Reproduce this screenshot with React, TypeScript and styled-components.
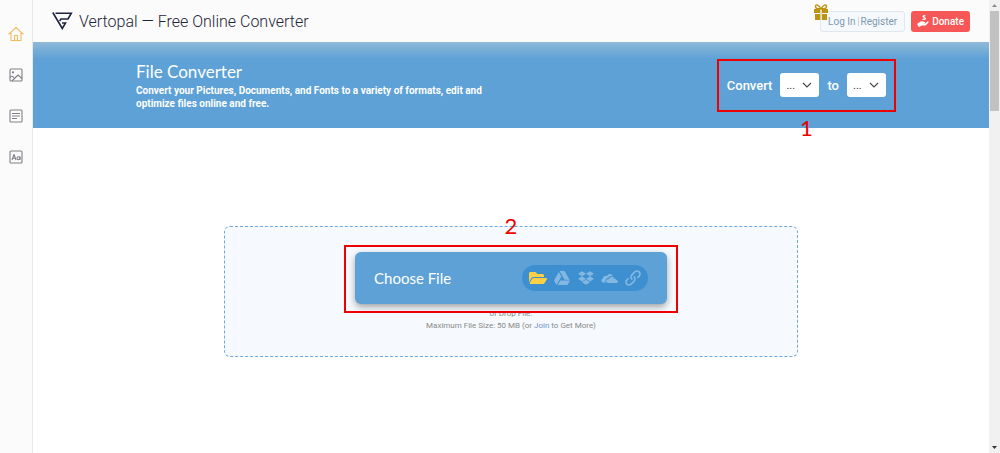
import React from "react";
import styled, { createGlobalStyle } from "styled-components";
import { FaFolderOpen, FaGoogleDrive, FaDropbox } from "react-icons/fa";
import { ImLink } from "react-icons/im";

const GlobalStyle = createGlobalStyle`
  *, *::before, *::after { box-sizing: border-box; }
  body { margin: 0; background: #fff; font-family: Roboto, "Liberation Sans", sans-serif; }
  a { text-decoration: none; color: inherit; }
  h1, h2, p { margin: 0; font-weight: 400; }
`;

const Page = styled.div`
  display: flex;
  min-height: 100vh;
`;

const Sidebar = styled.nav`
  flex: 0 0 33px;
  display: flex;
  flex-direction: column;
  align-items: center;
  gap: 25px;
  padding: 26px 1px 0 0;
  background: #fbfbfb;
  border-right: 1px solid #e6e8eb;
`;

const SideLink = styled.a<{ $active?: boolean }>`
  display: flex;
  color: ${(p) => (p.$active ? "#ecbd62" : "#7e8186")};
`;

const Main = styled.div`
  flex: 1;
  min-width: 0;
`;

const Header = styled.header`
  display: flex;
  align-items: center;
  justify-content: space-between;
  height: 42px;
  padding: 0 19px;
  background: #fbfbfb;
`;

const Brand = styled.a`
  display: flex;
  align-items: center;
  gap: 6px;
  color: #1f2438;
  font-size: 16px;
  font-weight: 300;
`;

const Actions = styled.div`
  display: flex;
  gap: 6px;
  font-size: 10px;
`;

const Account = styled.div`
  position: relative;
  display: flex;
  align-items: center;
  gap: 2px;
  height: 21px;
  padding: 0 7px;
  border: 1px solid #dfe7f1;
  border-radius: 3px;
  background: #f6f9fc;
  color: #7d99af;
`;

const Divider = styled.span`
  width: 1px;
  height: 9px;
  background: #c9d8e3;
`;

const GiftIcon = styled.svg`
  position: absolute;
  top: -8px;
  left: -8px;
`;

const Donate = styled.button`
  display: flex;
  align-items: center;
  gap: 3px;
  height: 21px;
  padding: 0 6px;
  border: 0;
  border-radius: 3px;
  background: #f85757;
  color: #fff;
  font: 500 10px Roboto, sans-serif;
`;

const Hero = styled.section`
  padding: 17px 16px;
  background: linear-gradient(#8fb9d8, #5da1d6 17px);
  color: #fff;
`;

const HeroInner = styled.div`
  display: flex;
  align-items: center;
  justify-content: space-between;
  max-width: 750px;
  min-height: 52px;
  margin: 0 auto;
`;

const Intro = styled.div`
  max-width: 376px;
`;

const Title = styled.h1`
  font: 400 17px/24px Lato, sans-serif;
`;

const Summary = styled.p`
  font-size: 10px;
  font-weight: 700;
  line-height: 13px;
`;

const Convert = styled.div`
  position: relative;
  display: flex;
  align-items: center;
  gap: 8px;
  font-size: 13px;
  font-weight: 500;
`;

const SelectWrap = styled.span`
  position: relative;
  display: flex;
  svg { position: absolute; right: 6px; top: 6px; pointer-events: none; }
`;

const Format = styled.select`
  appearance: none;
  width: 39px;
  height: 24px;
  padding: 0 6px;
  border: 0;
  border-radius: 3px;
  background: #fff;
  color: #333;
  font: 11px Roboto, sans-serif;
`;

const Marker = styled.div<{ $inset: string }>`
  position: absolute;
  inset: ${(p) => p.$inset};
  border: 2px solid #ee0000;
  pointer-events: none;
`;

const MarkerNumber = styled.span<{ $above?: boolean }>`
  position: absolute;
  left: 0;
  right: 0;
  ${(p) => (p.$above ? "bottom: 100%; margin-bottom: 9px;" : "top: 100%; margin-top: 6px;")}
  text-align: center;
  color: #ee0000;
  font: 22px/24px Lato, sans-serif;
`;

const DropZone = styled.section`
  display: flex;
  flex-direction: column;
  align-items: center;
  width: 60%;
  min-width: 340px;
  margin: 98px auto 0;
  padding: 25px 0 24px;
  border: 1px dashed #6fa9dc;
  border-radius: 6px;
  background: #f6fafe;
  color: #888;
  font-size: 8px;
  line-height: 12px;
`;

const Chooser = styled.div`
  position: relative;
  margin-bottom: 4px;
`;

const ChooseButton = styled.button`
  display: flex;
  align-items: center;
  justify-content: space-between;
  width: 312px;
  height: 52px;
  padding: 0 19px;
  border: 0;
  border-radius: 6px;
  background: #5da1d6;
  box-shadow: 0 3px 7px rgba(0, 0, 0, 0.35);
  color: #fff;
  font: 15px Lato, sans-serif;
`;

const Sources = styled.span`
  display: flex;
  align-items: center;
  justify-content: space-between;
  width: 126px;
  height: 26px;
  padding: 0 7px;
  border-radius: 13px;
  background: #3d8fd0;
  color: #83b8e3;
`;

const Limit = styled.p`
  a { color: #6f8fd0; }
`;

const Scrollbar = styled.div`
  position: sticky;
  top: 0;
  flex: 0 0 11px;
  display: flex;
  flex-direction: column;
  align-items: center;
  height: 100vh;
  background: #f1f1f1;
`;

const ScrollArrow = styled.svg`
  flex: 0 0 11px;
`;

const Thumb = styled.div`
  width: 9px;
  height: 22%;
  background: #c1c1c1;
`;

const Track = styled.div`
  flex: 1;
`;

const Chevron = () => (
  <svg width="12" height="12" viewBox="0 0 12 12" fill="none" stroke="#444" strokeWidth="1.1">
    <path d="M2 4l4 4 4-4" />
  </svg>
);

const FormatSelect = ({ label }: { label: string }) => (
  <SelectWrap>
    <Format aria-label={label}>
      <option>...</option>
    </Format>
    <Chevron />
  </SelectWrap>
);

const Gift = () => (
  <GiftIcon width="16" height="16" viewBox="0 0 16 16" fill="#bd9410">
    <path d="M1 5h6v4H1zM9 5h6v4H9zM2 10h5v6H2zM9 10h5v6H9z" />
    <path d="M8 5C6 .5 2.500 0 2.500 2.500S5 4.800 8 4.800s5.500.2 5.500-2.300S10 .5 8 5z" fill="none" stroke="#bd9410" strokeWidth="1.400" />
    <path d="M7.500 5h1v11h-1z" opacity=".5" />
  </GiftIcon>
);

const GivingHand = () => (
  <svg width="12" height="12" viewBox="0 0 12 12" fill="currentColor">
    <path d="M.6 8.600L3.600 6.600c.8-.5 1.700-.4 2.500-.1l1.500.6c.8.3.6 1.200-.2 1.200H5.800l2.400.1 2.200-2c.8-.6 1.600.3 1 1L9.200 9.900c-.4.4-.8.5-1.400.5H4.600L2.600 11.800c-.4.3-.8.2-1-.1L.4 9.600C.2 9.200.3 8.800.6 8.600z" />
    <path d="M8.500.3c-1.300-.7-3.300.1-3 1.500.2 1 1.800 1 2 1.400.2.500-1 .6-1.800.2l-.4 1.300c1.500.8 3.800.2 3.600-1.400-.1-1.200-1.800-1.200-2-1.600-.1-.4.700-.4 1.300-.1z" />
  </svg>
);

const TwinClouds = () => (
  <svg width="17" height="16" viewBox="0 0 17 16" fill="currentColor">
    <path d="M4.800 12.500H2.500C-.3 12.300-.2 8.800 2 8.400 1.800 6.200 4.500 5 5.900 6.200 7.200 3.200 11 3.200 12 6 9.800 5.300 8.200 6.300 7.600 7.800 5.200 7.800 3.800 10.200 4.800 12.500z" />
    <path d="M7.200 13C4.500 13 4.600 9 7.300 8.900h1C8.700 6.100 12.600 6 13.300 8.700c1.300-.3 2 .4 2 1.400 2.200.2 2.200 2.900 0 2.900z" />
  </svg>
);

const SideIcon = ({ children }: { children: React.ReactNode }) => (
  <svg width="16" height="16" viewBox="0 0 16 16" fill="none" stroke="currentColor" strokeWidth="1.1" strokeLinejoin="round">
    {children}
  </svg>
);

const Frame = () => <rect x="2" y="2" width="12" height="12" rx="1" />;

export default function App() {
  return (
    <>
      <GlobalStyle />
      <Page>
        <Sidebar>
          <SideLink href="#" $active aria-label="Home">
            <SideIcon>
              <path d="M.5 8.3L8 1.5l7.500 6.800M3 6.500V14.500h10V6.500M6.500 14.500V9.500h3v5" />
            </SideIcon>
          </SideLink>
          <SideLink href="#" aria-label="Pictures">
            <SideIcon>
              <Frame />
              <circle cx="5" cy="5.300" r=".6" />
              <path d="M2 10.500c1.500-2 3-1.500 4 .5M4 14l6-6 4 3.500" />
            </SideIcon>
          </SideLink>
          <SideLink href="#" aria-label="Documents">
            <SideIcon>
              <Frame />
              <path d="M4 5.500h8M4 8h8M4 10.500h5" />
            </SideIcon>
          </SideLink>
          <SideLink href="#" aria-label="Fonts">
            <SideIcon>
              <Frame />
              <path d="M4 11l2-5.500L8 11M4.700 9.300h2.600M12 7.500V11" />
              <circle cx="10.500" cy="9.300" r="1.500" />
            </SideIcon>
          </SideLink>
        </Sidebar>
        <Main>
          <Header>
            <Brand href="#">
              <svg width="21" height="18" viewBox="0 0 21 18" fill="none" stroke="#1f2340" strokeWidth="1.600">
                <path d="M.8 .5L10.300 16.500L13.500 11H10M3.500 1.200H19.300L16 7H9L7.600 9" />
              </svg>
              Vertopal — Free Online Converter
            </Brand>
            <Actions>
              <Account>
                <Gift />
                <a href="#">Log In</a>
                <Divider />
                <a href="#">Register</a>
              </Account>
              <Donate type="button">
                <GivingHand />
                Donate
              </Donate>
            </Actions>
          </Header>
          <Hero>
            <HeroInner>
              <Intro>
                <Title>File Converter</Title>
                <Summary>
                  Convert your Pictures, Documents, and Fonts to a variety of formats, edit and optimize files online and free.
                </Summary>
              </Intro>
              <Convert>
                Convert
                <FormatSelect label="Source format" />
                to
                <FormatSelect label="Target format" />
                <Marker $inset="-14px -10px -15px">
                  <MarkerNumber>1</MarkerNumber>
                </Marker>
              </Convert>
            </HeroInner>
          </Hero>
          <DropZone>
            <Chooser>
              <ChooseButton type="button">
                Choose File
                <Sources>
                  <FaFolderOpen size={18} color="#fbd044" />
                  <FaGoogleDrive size={16} />
                  <FaDropbox size={16} />
                  <TwinClouds />
                  <ImLink size={16} />
                </Sources>
              </ChooseButton>
              <Marker $inset="-7px -11px -9px">
                <MarkerNumber $above>2</MarkerNumber>
              </Marker>
            </Chooser>
            <p>or Drop File.</p>
            <Limit>
              Maximum File Size: 50 MB (or <a href="#">Join</a> to Get More)
            </Limit>
          </DropZone>
        </Main>
        <Scrollbar aria-hidden="true">
          <ScrollArrow width="11" height="11" viewBox="0 0 11 11">
            <path d="M3 7l2.500-3L8 7z" fill="#8a8a8a" />
          </ScrollArrow>
          <Thumb />
          <Track />
          <ScrollArrow width="11" height="11" viewBox="0 0 11 11">
            <path d="M3 4l2.500 3L8 4z" fill="#333" />
          </ScrollArrow>
        </Scrollbar>
      </Page>
    </>
  );
}
